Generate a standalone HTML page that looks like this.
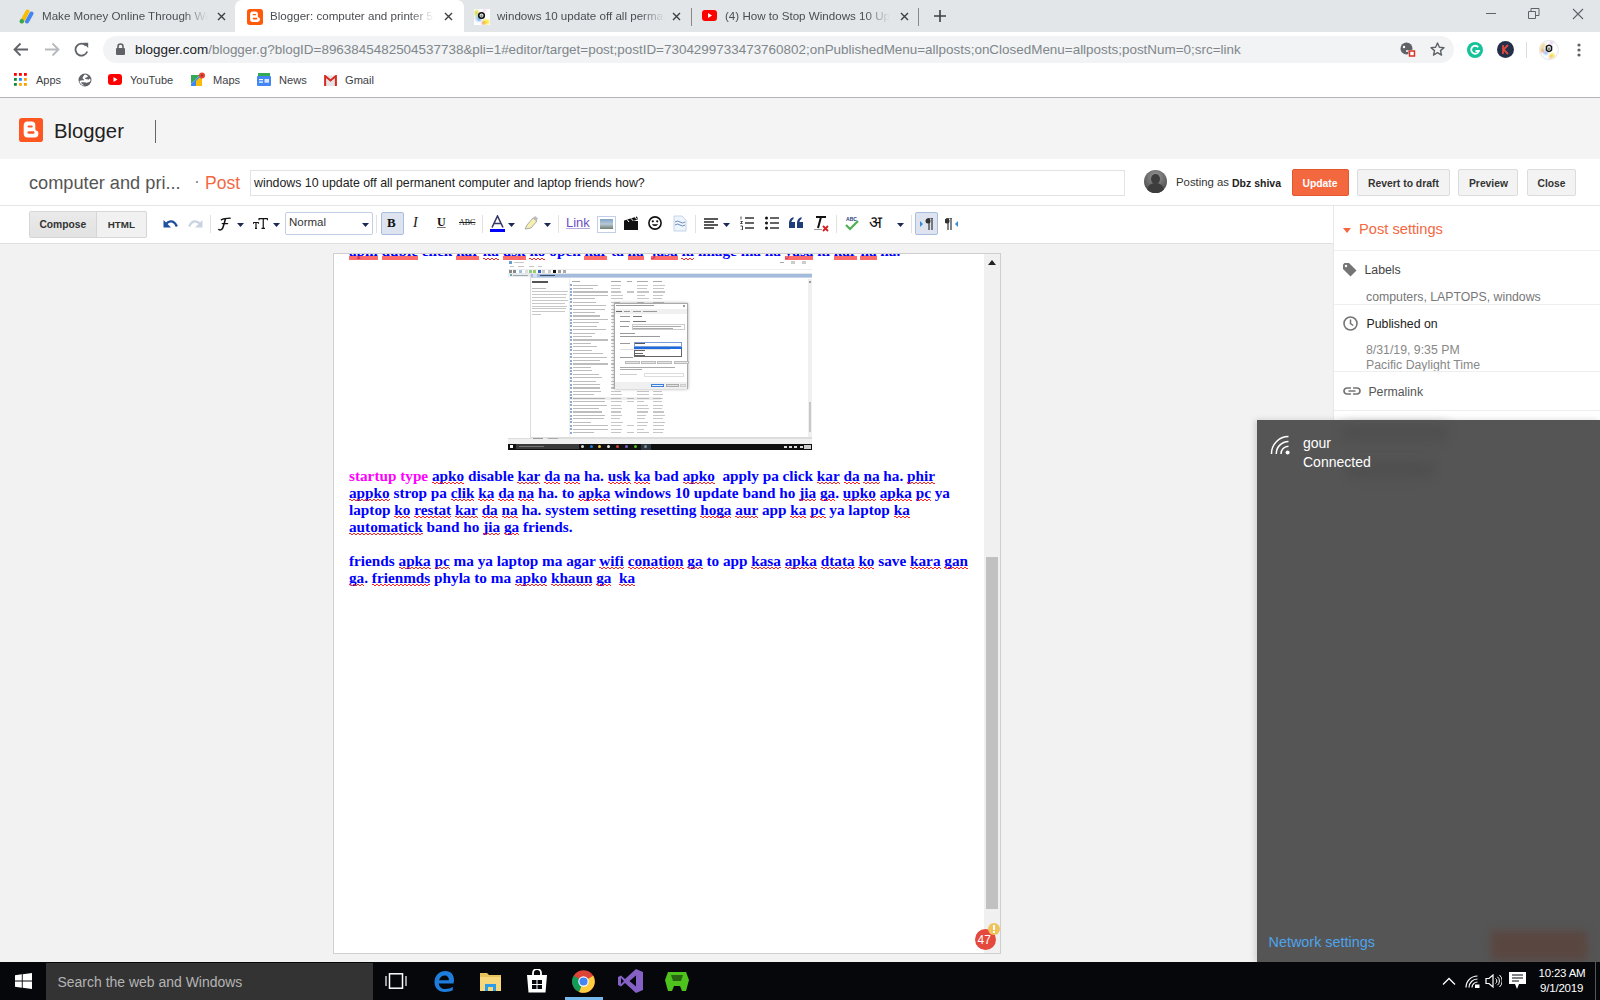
<!DOCTYPE html>
<html><head><meta charset="utf-8">
<style>
*{box-sizing:border-box;margin:0;padding:0}
html,body{width:1600px;height:1000px;overflow:hidden;background:#f2f2f2;font-family:"Liberation Sans",sans-serif;position:relative}
.a{position:absolute}
.t{position:absolute;white-space:nowrap;line-height:1}
/* chrome */
#tabs{left:0;top:0;width:1600px;height:32px;background:#e3e6e9}
#toolbar{left:0;top:32px;width:1600px;height:65px;background:#fff}
#bline{left:0;top:97px;width:1600px;height:1px;background:#b6b4ba}
.tabtxt{font-size:12.4px;color:#4a4d51}
.x{font-size:14px;color:#3c4043}
/* blogger */
#bhead{left:0;top:98px;width:1600px;height:61px;background:#f4f4f4}
#trow{left:0;top:159px;width:1600px;height:47px;background:#fff;border-bottom:1px solid #e5e5e5}
#tbar{left:0;top:206px;width:1333px;height:38px;background:#fff;border-bottom:1px solid #e0e0e0}
#side{left:1333px;top:206px;width:267px;height:756px;background:#fff;border-left:1px solid #e8e8e8}
.btn{position:absolute;height:27px;border:1px solid #d6d6d6;background:#f3f3f3;border-radius:2px;font-size:11.4px;font-weight:bold;color:#333;text-align:center;line-height:25px}
#frame{left:333px;top:253px;width:668px;height:701px;background:#fff;border:1px solid #cfcfcf;overflow:hidden}
.ed{font:bold 15.24px/17px "Liberation Serif",serif;color:#0000ff}
.sp{position:relative}.sp2{position:relative}.sp2::after{content:"";position:absolute;left:0;right:0;top:13.8px;height:4px;background:rgba(255,70,70,.8)}.sp::after{content:"";position:absolute;left:0;right:0;top:15.4px;height:2px;background:linear-gradient(90deg,#f22 50%,transparent 50%) 0 0/4px 1px repeat-x,linear-gradient(90deg,transparent 50%,#f22 50%) 0 1px/4px 1px repeat-x}
/* flyout */
#fly{left:1257px;top:420px;width:343px;height:542px;background:#555555;box-shadow:-2px 0 6px rgba(0,0,0,.15)}
#task{left:0;top:962px;width:1600px;height:38px;background:#05070b}
</style></head><body>
<div id="tabs" class="a"></div>
<div id="toolbar" class="a"></div>
<div id="bline" class="a"></div>

<!-- TAB STRIP -->
<div class="a" style="left:235px;top:0;width:229px;height:32px;background:#fff;border-radius:7px 7px 0 0"></div>
<svg class="a" style="left:19px;top:9px" width="16" height="15" viewBox="0 0 16 15"><path d="M3 12.5 L8.5 2.5" stroke="#fbbc04" stroke-width="4" stroke-linecap="round"/><path d="M8 12.5 L12.5 4.5" stroke="#4285f4" stroke-width="4" stroke-linecap="round"/><circle cx="2.8" cy="12.3" r="2.2" fill="#34a853"/></svg>
<div class="t tabtxt" style="left:42px;top:10px;font-size:11.6px;width:166px;overflow:hidden;-webkit-mask-image:linear-gradient(90deg,#000 85%,transparent)">Make Money Online Through Web</div>
<svg class="a" style="left:217px;top:12px" width="9" height="9" viewBox="0 0 9 9"><path d="M1 1L8 8M8 1L1 8" stroke="#3c4043" stroke-width="1.4"/></svg>
<svg class="a" style="left:246.5px;top:8.5px" width="16" height="16" viewBox="0 0 24 24"><rect width="24" height="24" rx="4" fill="#ff5a0a"/><path d="M4.7 7.5Q4.7 3.6 8.6 3.6H12.6Q16.3 3.6 16.3 7.3V11.2Q16.3 12.6 17.6 12.8Q19.4 13 19.4 15V15.8Q19.4 19.4 15.8 19.4H8.6Q4.7 19.4 4.7 15.5Z" fill="#fff"/><rect x="8.5" y="7.6" width="5.2" height="1.9" rx="0.95" fill="#ff5a0a"/><rect x="8.5" y="13.3" width="7" height="2.4" rx="1.2" fill="#ff5a0a"/></svg>
<div class="t tabtxt" style="left:270px;top:10px;font-size:11.6px;width:164px;overflow:hidden;-webkit-mask-image:linear-gradient(90deg,#000 85%,transparent)">Blogger: computer and printer 5 min</div>
<svg class="a" style="left:444px;top:12px" width="9" height="9" viewBox="0 0 9 9"><path d="M1 1L8 8M8 1L1 8" stroke="#3c4043" stroke-width="1.4"/></svg>
<svg class="a" style="left:474px;top:8.5px" width="16" height="16" viewBox="0 0 16 16"><defs><filter id="bl1" x="-20%" y="-20%" width="140%" height="140%"><feGaussianBlur stdDeviation="0.9"/></filter></defs><rect width="16" height="16" fill="#fff"/><g filter="url(#bl1)"><ellipse cx="2.5" cy="4" rx="2" ry="3" fill="#d8d040"/><ellipse cx="3.5" cy="7.5" rx="1.5" ry="1.5" fill="#50e0f0"/><ellipse cx="5" cy="10.5" rx="2.5" ry="1.5" fill="#4aa0f8"/><ellipse cx="12" cy="13" rx="3.5" ry="2.5" fill="#f8e830"/><ellipse cx="9.5" cy="14" rx="1.5" ry="1.8" fill="#f07040"/><circle cx="10.5" cy="1.5" r="1" fill="#e080f0"/><circle cx="2" cy="9" r="1" fill="#f0a070"/></g><circle cx="7.5" cy="6.5" r="2.8" fill="none" stroke="#111" stroke-width="1.6"/><path d="M6.5 5.5h2v2.5h-2z" fill="#888"/></svg>
<div class="t tabtxt" style="left:497px;top:10px;font-size:11.6px;width:168px;overflow:hidden;-webkit-mask-image:linear-gradient(90deg,#000 85%,transparent)">windows 10 update off all permanent</div>
<svg class="a" style="left:672px;top:12px" width="9" height="9" viewBox="0 0 9 9"><path d="M1 1L8 8M8 1L1 8" stroke="#3c4043" stroke-width="1.4"/></svg>
<div class="a" style="left:691px;top:8px;width:1px;height:18px;background:#888"></div>
<svg class="a" style="left:702px;top:10px" width="15" height="11" viewBox="0 0 15 11"><rect width="15" height="11" rx="3" fill="#f00"/><path d="M6 3v5l4-2.5z" fill="#fff"/></svg>
<div class="t tabtxt" style="left:725px;top:10px;font-size:11.6px;width:165px;overflow:hidden;-webkit-mask-image:linear-gradient(90deg,#000 85%,transparent)">(4) How to Stop Windows 10 Update</div>
<svg class="a" style="left:900px;top:12px" width="9" height="9" viewBox="0 0 9 9"><path d="M1 1L8 8M8 1L1 8" stroke="#3c4043" stroke-width="1.4"/></svg>
<div class="a" style="left:918px;top:8px;width:1px;height:18px;background:#888"></div>
<svg class="a" style="left:934px;top:10px" width="12" height="12" viewBox="0 0 12 12"><path d="M6 0v12M0 6h12" stroke="#3c4043" stroke-width="1.6"/></svg>
<div class="a" style="left:1486px;top:13px;width:10px;height:1px;background:#5f6368"></div>
<svg class="a" style="left:1528px;top:8px" width="12" height="11" viewBox="0 0 12 11"><path d="M.5 3.5h7v7h-7zM3 3.5V.5h8v7H8" fill="none" stroke="#5f6368" stroke-width="1"/></svg>
<svg class="a" style="left:1572px;top:8px" width="12" height="12" viewBox="0 0 12 12"><path d="M1 1L11 11M11 1L1 11" stroke="#5f6368" stroke-width="1.1"/></svg>
<!-- TOOLBAR -->
<svg class="a" style="left:13px;top:42px" width="16" height="15" viewBox="0 0 16 15"><path d="M15 7.5H2M7.5 1.5L1.5 7.5l6 6" fill="none" stroke="#5f6368" stroke-width="1.8"/></svg>
<svg class="a" style="left:44px;top:42px" width="16" height="15" viewBox="0 0 16 15"><path d="M1 7.5h13M8.5 1.5l6 6-6 6" fill="none" stroke="#b6b9bd" stroke-width="1.8"/></svg>
<svg class="a" style="left:74px;top:42px" width="16" height="15" viewBox="0 0 16 15"><path d="M13.2 9.5A6 6 0 1 1 12 3.6" fill="none" stroke="#5f6368" stroke-width="1.8"/><path d="M9 .8h5.2V6z" fill="#5f6368"/></svg>
<div class="a" style="left:103px;top:36px;width:1351px;height:27px;background:#f1f3f4;border-radius:14px"></div>
<svg class="a" style="left:116px;top:43px" width="9" height="12" viewBox="0 0 9 12"><path d="M2 5V3.5a2.5 2.5 0 0 1 5 0V5" fill="none" stroke="#5f6368" stroke-width="1.6"/><rect x="0" y="5" width="9" height="7" rx="1" fill="#5f6368"/></svg>
<div class="t" style="left:135px;top:43px;font-size:13.45px;color:#80868b"><span style="color:#202124">blogger.com</span>/blogger.g?blogID=8963845482504537738&amp;pli=1#editor/target=post;postID=7304299733473760802;onPublishedMenu=allposts;onClosedMenu=allposts;postNum=0;src=link</div>
<svg class="a" style="left:1400px;top:42px" width="16" height="15" viewBox="0 0 16 15"><circle cx="6.5" cy="6.5" r="6" fill="#5f6368"/><circle cx="4" cy="5" r="1.2" fill="#fff"/><circle cx="7" cy="9" r="1" fill="#fff"/><rect x="8.5" y="8" width="7" height="7" fill="#fff"/><rect x="9.5" y="9" width="5" height="5" fill="none" stroke="#d93025" stroke-width="1.5"/></svg>
<svg class="a" style="left:1430px;top:42px" width="15" height="14" viewBox="0 0 15 14"><path d="M7.5 1l1.9 4.2 4.6.4-3.5 3 1 4.5-4-2.4-4 2.4 1-4.5-3.5-3 4.6-.4z" fill="none" stroke="#5f6368" stroke-width="1.4" stroke-linejoin="round"/></svg>
<svg class="a" style="left:1467px;top:42px" width="16" height="16" viewBox="0 0 16 16"><circle cx="8" cy="8" r="8" fill="#15c39a"/><path d="M11.3 5.2A4 4 0 1 0 12 9H8.5" fill="none" stroke="#fff" stroke-width="1.8"/></svg>
<svg class="a" style="left:1497px;top:41px" width="17" height="17" viewBox="0 0 17 17"><circle cx="8.5" cy="8.5" r="8.5" fill="#24304a"/><path d="M6 4v9M11 4L6.5 8.5 11 13" fill="none" stroke="#e04a3a" stroke-width="1.8"/></svg>
<div class="a" style="left:1526px;top:42px;width:1px;height:16px;background:#dadce0"></div>
<svg class="a" style="left:1538.5px;top:39.5px" width="20" height="20" viewBox="0 0 20 20"><defs><filter id="bl2" x="-20%" y="-20%" width="140%" height="140%"><feGaussianBlur stdDeviation="0.8"/></filter></defs><circle cx="10" cy="10" r="9.5" fill="#fff" stroke="#e2e2e2" stroke-width=".8"/><g filter="url(#bl2)"><path d="M3 12A8 8 0 0 1 6 4" stroke="#e8c040" stroke-width="1.8" fill="none"/><circle cx="4" cy="11" r="1.3" fill="#f07030"/><circle cx="5.5" cy="9" r="1" fill="#40e0f0"/><ellipse cx="7" cy="13" rx="2" ry="1.2" fill="#4aa0f8"/><ellipse cx="13" cy="15.5" rx="2.5" ry="2" fill="#f8e020"/><circle cx="11.5" cy="17" r="1" fill="#f06030"/><circle cx="12.5" cy="3" r="0.9" fill="#c040f0"/><circle cx="10" cy="10" r="9" fill="none" stroke="#ccc" stroke-width=".6" opacity=".5"/></g><path d="M7.5 6.5Q10 4 12.5 6.5V10Q10 13 7.5 10Z" fill="none" stroke="#111" stroke-width="1.6"/><rect x="9" y="7.5" width="2" height="3" fill="#888"/></svg>
<svg class="a" style="left:1577px;top:43px" width="4" height="14" viewBox="0 0 4 14"><circle cx="2" cy="2" r="1.6" fill="#5f6368"/><circle cx="2" cy="7" r="1.6" fill="#5f6368"/><circle cx="2" cy="12" r="1.6" fill="#5f6368"/></svg>
<!-- BOOKMARKS -->
<svg class="a" style="left:14px;top:73px" width="13" height="13" viewBox="0 0 13 13">
<rect x="0" y="0" width="2.8" height="2.8" fill="#f00"/><rect x="5" y="0" width="2.8" height="2.8" fill="#f00"/><rect x="10" y="0" width="2.8" height="2.8" fill="#f00"/>
<rect x="0" y="5" width="2.8" height="2.8" fill="#0a8a3a"/><rect x="5" y="5" width="2.8" height="2.8" fill="#1a8cff"/><rect x="10" y="5" width="2.8" height="2.8" fill="#f5a000"/>
<rect x="0" y="10" width="2.8" height="2.8" fill="#0a8a3a"/><rect x="5" y="10" width="2.8" height="2.8" fill="#ffa800"/><rect x="10" y="10" width="2.8" height="2.8" fill="#f5a000"/></svg>
<div class="t" style="left:36px;top:74.8px;font-size:11px;color:#3c4043">Apps</div>
<svg class="a" style="left:78px;top:73px" width="14" height="14" viewBox="0 0 14 14"><circle cx="7" cy="7" r="6.5" fill="#5f6368"/><path d="M7 1.5c1.5.3 2.5 1 3 2-.8 1-2.5.8-3 2 .5 1 2 .5 3.5 1.2L12 5.5c.5.8.6 1.6.5 2.5C11 9.5 9 10 7.5 9.5 6 9 4.5 9 3 9.5c.5 1 1.5 2 3 2.5L5 12.5C3 11.5 1.8 10 1.5 8c1.5-.5 3-1 4.5-.5C6.5 6.5 5 6 4.5 5 5 3.5 6 2 7 1.5z" fill="#fff"/></svg>
<svg class="a" style="left:108px;top:74px" width="14" height="11" viewBox="0 0 14 11"><rect width="14" height="11" rx="3" fill="#f00"/><path d="M5.5 3v5l4-2.5z" fill="#fff"/></svg>
<div class="t" style="left:130px;top:74.8px;font-size:11px;color:#3c4043">YouTube</div>
<svg class="a" style="left:191px;top:72px" width="14" height="14" viewBox="0 0 14 14"><path d="M0 3h9l-9 9z" fill="#34a853"/><path d="M0 12L9 3h2v11H0z" fill="#4285f4"/><path d="M5 9l4-4 2 2v7H5z" fill="#fbbc04"/><circle cx="11" cy="3.5" r="3" fill="#ea4335"/><circle cx="11" cy="3.5" r="1" fill="#a52714"/></svg>
<div class="t" style="left:213px;top:74.8px;font-size:11.1px;color:#3c4043">Maps</div>
<svg class="a" style="left:257px;top:73px" width="14" height="13" viewBox="0 0 14 13"><rect x="1" y="0" width="12" height="4" fill="#34a853"/><rect x="0" y="3" width="14" height="10" rx="1" fill="#4285f4"/><rect x="2" y="6" width="4" height="1.2" fill="#fff"/><rect x="2" y="8.5" width="4" height="1.2" fill="#fff"/><rect x="7.5" y="6" width="4.5" height="3.7" fill="#fff" opacity=".8"/></svg>
<div class="t" style="left:279px;top:74.8px;font-size:11.1px;color:#3c4043">News</div>
<svg class="a" style="left:324px;top:75px" width="13" height="11" viewBox="0 0 13 11"><rect x="1" y="0.5" width="11" height="10.5" fill="#e4e4e4"/><path d="M1.1 11V1L6.5 5.5 11.9 1V11" fill="none" stroke="#d42a20" stroke-width="2"/></svg>
<div class="t" style="left:345px;top:74.8px;font-size:11.1px;color:#3c4043">Gmail</div>

<div id="bhead" class="a"></div>
<div id="trow" class="a"></div>
<div id="tbar" class="a"></div>
<div id="side" class="a"></div>


<!-- SIDEBAR -->
<svg class="a" style="left:1343px;top:228px" width="8" height="5" viewBox="0 0 8 5"><path d="M0 0h8L4 5z" fill="#f4683f"/></svg>
<div class="t" style="left:1359px;top:221.6px;font-size:14.67px;color:#f4683f">Post settings</div>
<div class="a" style="left:1334px;top:250px;width:266px;height:1px;background:#eeeeee"></div>
<svg class="a" style="left:1343px;top:263px" width="14" height="14" viewBox="0 0 14 14"><path d="M0 1.5V6l7.5 7.5L13.5 7.5 6 0H1.5z" fill="#757575"/><circle cx="3" cy="3" r="1.2" fill="#fff"/></svg>
<div class="t" style="left:1364.5px;top:263.8px;font-size:12.3px;color:#444">Labels</div>
<div class="t" style="left:1366px;top:291.2px;font-size:12.3px;color:#777">computers, LAPTOPS, windows</div>
<div class="a" style="left:1334px;top:304px;width:266px;height:1px;background:#eeeeee"></div>
<svg class="a" style="left:1343px;top:316px" width="15" height="15" viewBox="0 0 15 15"><circle cx="7.5" cy="7.5" r="6.5" fill="none" stroke="#757575" stroke-width="1.6"/><path d="M7.5 3.5v4l2.8 2" fill="none" stroke="#757575" stroke-width="1.5"/></svg>
<div class="t" style="left:1366.5px;top:317.5px;font-size:12.3px;color:#222">Published on</div>
<div class="t" style="left:1366px;top:344.1px;font-size:12.3px;color:#888">8/31/19, 9:35 PM</div>
<div class="t" style="left:1366px;top:358.7px;font-size:12.3px;color:#888">Pacific Daylight Time</div>
<div class="a" style="left:1334px;top:371px;width:266px;height:1px;background:#eeeeee"></div>
<svg class="a" style="left:1342.5px;top:387px" width="18" height="8" viewBox="0 0 18 8"><path d="M8 1H4a3 3 0 0 0 0 6h4M10 1h4a3 3 0 0 1 0 6h-4M5.5 4h7" fill="none" stroke="#757575" stroke-width="1.7"/></svg>
<div class="t" style="left:1368.4px;top:385.6px;font-size:12.3px;color:#555">Permalink</div>
<div class="a" style="left:1334px;top:410px;width:266px;height:1px;background:#eeeeee"></div>
<div id="frame" class="a"></div><!-- FRAME CONTENT -->
<div class="a" style="left:334px;top:254px;width:650px;height:699px;overflow:hidden">
 <div class="t ed" style="left:15px;top:-11.7px;line-height:17px"><span class="sp2">apni</span> <span class="sp2">duble</span> click <span class="sp2">kar</span> <span class="sp">ka</span> <span class="sp2">usk</span> <span class="sp">ko</span> open <span class="sp2">kar</span> ta <span class="sp2">na</span>&nbsp; <span class="sp2">jasa</span> <span class="sp">ki</span> image ma na <span class="sp2">yasa</span> ki <span class="sp2">kar</span> <span class="sp2">na</span> ha.</div>
 <div class="t ed" style="left:15px;top:213px;line-height:17px"><span style="color:#ff00ff">startup type</span> <span class="sp">apko</span> disable <span class="sp">kar</span> <span class="sp">da</span> <span class="sp">na</span> ha. <span class="sp">usk</span> <span class="sp">ka</span> bad <span class="sp">apko</span>&nbsp; apply pa click <span class="sp">kar</span> <span class="sp">da</span> <span class="sp">na</span> ha. <span class="sp">phir</span><br><span class="sp">appko</span> strop pa <span class="sp">clik</span> <span class="sp">ka</span> <span class="sp">da</span> <span class="sp">na</span> ha. to <span class="sp">apka</span> windows 10 update band ho <span class="sp">jia</span> <span class="sp">ga</span>. <span class="sp">upko</span> <span class="sp">apka</span> <span class="sp">pc</span> ya<br>laptop <span class="sp">ko</span> <span class="sp">restat</span> <span class="sp">kar</span> <span class="sp">da</span> <span class="sp">na</span> ha. system setting resetting <span class="sp">hoga</span> <span class="sp">aur</span> app <span class="sp">ka</span> <span class="sp">pc</span> ya laptop <span class="sp">ka</span><br><span class="sp">automatick</span> band ho <span class="sp">jia</span> <span class="sp">ga</span> friends.<br>&nbsp;<br>friends <span class="sp">apka</span> <span class="sp">pc</span> ma ya laptop ma agar <span class="sp">wifi</span> <span class="sp">conation</span> <span class="sp">ga</span> to app <span class="sp">kasa</span> <span class="sp">apka</span> <span class="sp">dtata</span> <span class="sp">ko</span> save <span class="sp">kara</span> <span class="sp">gan</span><br><span class="sp">ga</span>. <span class="sp">frienmds</span> phyla to ma <span class="sp">apko</span> <span class="sp">khaun</span> <span class="sp">ga</span>&nbsp; <span class="sp">ka</span></div>
 <div id="shot" class="a" style="left:174px;top:7px;width:304px;height:189px;background:#fff;overflow:hidden;filter:blur(0.5px)">
<div class="a" style="left:0;top:176.5px;width:304px;height:6px;background:#f0f0f0;border-top:0.6px solid #ddd"></div>
<div class="a" style="left:1px;top:0px;width:3px;height:3px;background:#6c9bd2;"></div>
<div class="a" style="left:6px;top:1px;width:10px;height:1px;background:#c8c8c8;"></div>
<div class="a" style="left:272px;top:1px;width:4px;height:1px;background:#aaa;"></div>
<div class="a" style="left:283px;top:0px;width:4px;height:3px;background:#ccc;"></div>
<div class="a" style="left:294px;top:0px;width:4px;height:3px;background:#ccc;"></div>
<div class="a" style="left:2px;top:5px;width:4px;height:1.3px;background:#c4c4c4;"></div>
<div class="a" style="left:10px;top:5px;width:6px;height:1.3px;background:#c4c4c4;"></div>
<div class="a" style="left:21px;top:5px;width:5px;height:1.3px;background:#c4c4c4;"></div>
<div class="a" style="left:30px;top:5px;width:4px;height:1.3px;background:#c4c4c4;"></div>
<div class="a" style="left:0px;top:7.5px;width:304px;height:1px;background:#eeeeee;"></div>
<div class="a" style="left:1px;top:9px;width:2.6px;height:2.6px;background:#888;"></div>
<div class="a" style="left:5px;top:9px;width:2.6px;height:2.6px;background:#888;"></div>
<div class="a" style="left:11px;top:9px;width:2.6px;height:2.6px;background:#9cc0e8;"></div>
<div class="a" style="left:17px;top:9px;width:2.6px;height:2.6px;background:#ddd;"></div>
<div class="a" style="left:21px;top:9px;width:2.6px;height:2.6px;background:#8c8;"></div>
<div class="a" style="left:25px;top:9px;width:2.6px;height:2.6px;background:#9c6;"></div>
<div class="a" style="left:30px;top:9px;width:2.6px;height:2.6px;background:#3060c0;"></div>
<div class="a" style="left:34px;top:9px;width:2.6px;height:2.6px;background:#ccc;"></div>
<div class="a" style="left:40px;top:9px;width:2.6px;height:2.6px;background:#ccc;"></div>
<div class="a" style="left:45px;top:9px;width:2.6px;height:2.6px;background:#111;"></div>
<div class="a" style="left:50px;top:9px;width:2.6px;height:2.6px;background:#999;"></div>
<div class="a" style="left:55px;top:9px;width:2.6px;height:2.6px;background:#aaa;"></div>
<div class="a" style="left:0px;top:12px;width:304px;height:0.8px;background:#e6e6e6;"></div>
<div class="a" style="left:0px;top:12.5px;width:22px;height:3.5px;background:#e9edf2;"></div>
<div class="a" style="left:2px;top:13.3px;width:2px;height:2px;background:#7aa;"></div>
<div class="a" style="left:5px;top:13.8px;width:15px;height:1.3px;background:#9aa;"></div>
<div class="a" style="left:22px;top:12px;width:1px;height:165px;background:#dcdcdc;"></div>
<div class="a" style="left:23px;top:12.5px;width:281px;height:3.5px;background:#a3bbdc;"></div>
<div class="a" style="left:25px;top:13px;width:4px;height:2.5px;background:#d0dff0;"></div>
<div class="a" style="left:32px;top:13.8px;width:15px;height:1.3px;background:#3d4d6a;"></div>
<div class="a" style="left:23px;top:16px;width:281px;height:0.8px;background:#c9d6e8;"></div>
<div class="a" style="left:24px;top:20px;width:16px;height:1.6px;background:#555;"></div>
<div class="a" style="left:24px;top:27px;width:14px;height:1.1px;background:#bbb;"></div>
<div class="a" style="left:24px;top:30.0px;width:36px;height:1.1px;background:#c8c8c8;"></div>
<div class="a" style="left:24px;top:32.9px;width:35px;height:1.1px;background:#c8c8c8;"></div>
<div class="a" style="left:24px;top:35.8px;width:34px;height:1.1px;background:#c8c8c8;"></div>
<div class="a" style="left:24px;top:38.7px;width:36px;height:1.1px;background:#c8c8c8;"></div>
<div class="a" style="left:24px;top:41.6px;width:33px;height:1.1px;background:#c8c8c8;"></div>
<div class="a" style="left:24px;top:44.5px;width:35px;height:1.1px;background:#c8c8c8;"></div>
<div class="a" style="left:24px;top:47.4px;width:34px;height:1.1px;background:#c8c8c8;"></div>
<div class="a" style="left:24px;top:50.3px;width:33px;height:1.1px;background:#c8c8c8;"></div>
<div class="a" style="left:24px;top:53.2px;width:9px;height:1.1px;background:#c8c8c8;"></div>
<div class="a" style="left:61px;top:17px;width:0.8px;height:160px;background:#eeeeee;"></div>
<div class="a" style="left:64px;top:19.5px;width:8px;height:1.1px;background:#aaa;"></div>
<div class="a" style="left:103px;top:19.5px;width:10px;height:1.1px;background:#aaa;"></div>
<div class="a" style="left:119px;top:19.5px;width:5px;height:1.1px;background:#aaa;"></div>
<div class="a" style="left:129px;top:19.5px;width:11px;height:1.1px;background:#aaa;"></div>
<div class="a" style="left:145px;top:19.5px;width:9px;height:1.1px;background:#aaa;"></div>
<div class="a" style="left:62px;top:23.2px;width:2px;height:2px;background:#8eaad0;"></div>
<div class="a" style="left:65px;top:23.5px;width:25px;height:1.2px;background:#bdbdbd;"></div>
<div class="a" style="left:103px;top:23.5px;width:10px;height:1.2px;background:#c6c6c6;"></div>
<div class="a" style="left:129px;top:23.5px;width:11px;height:1.2px;background:#c6c6c6;"></div>
<div class="a" style="left:145px;top:23.5px;width:12px;height:1.2px;background:#c6c6c6;"></div>
<div class="a" style="left:62px;top:26.63px;width:2px;height:2px;background:#8eaad0;"></div>
<div class="a" style="left:65px;top:26.93px;width:20px;height:1.2px;background:#bdbdbd;"></div>
<div class="a" style="left:103px;top:26.93px;width:9px;height:1.2px;background:#c6c6c6;"></div>
<div class="a" style="left:129px;top:26.93px;width:10px;height:1.2px;background:#c6c6c6;"></div>
<div class="a" style="left:145px;top:26.93px;width:11px;height:1.2px;background:#c6c6c6;"></div>
<div class="a" style="left:62px;top:30.06px;width:2px;height:2px;background:#8eaad0;"></div>
<div class="a" style="left:65px;top:30.36px;width:35px;height:1.2px;background:#bdbdbd;"></div>
<div class="a" style="left:103px;top:30.36px;width:10px;height:1.2px;background:#c6c6c6;"></div>
<div class="a" style="left:119px;top:30.36px;width:7px;height:1.2px;background:#c6c6c6;"></div>
<div class="a" style="left:129px;top:30.36px;width:12px;height:1.2px;background:#c6c6c6;"></div>
<div class="a" style="left:145px;top:30.36px;width:12px;height:1.2px;background:#c6c6c6;"></div>
<div class="a" style="left:62px;top:33.49px;width:2px;height:2px;background:#8eaad0;"></div>
<div class="a" style="left:65px;top:33.79px;width:35px;height:1.2px;background:#bdbdbd;"></div>
<div class="a" style="left:103px;top:33.79px;width:12px;height:1.2px;background:#c6c6c6;"></div>
<div class="a" style="left:129px;top:33.79px;width:8px;height:1.2px;background:#c6c6c6;"></div>
<div class="a" style="left:145px;top:33.79px;width:10px;height:1.2px;background:#c6c6c6;"></div>
<div class="a" style="left:62px;top:36.92px;width:2px;height:2px;background:#8eaad0;"></div>
<div class="a" style="left:65px;top:37.22px;width:22px;height:1.2px;background:#bdbdbd;"></div>
<div class="a" style="left:103px;top:37.22px;width:12px;height:1.2px;background:#c6c6c6;"></div>
<div class="a" style="left:129px;top:37.22px;width:12px;height:1.2px;background:#c6c6c6;"></div>
<div class="a" style="left:145px;top:37.22px;width:9px;height:1.2px;background:#c6c6c6;"></div>
<div class="a" style="left:62px;top:40.35000000000001px;width:2px;height:2px;background:#8eaad0;"></div>
<div class="a" style="left:65px;top:40.650000000000006px;width:23px;height:1.2px;background:#bdbdbd;"></div>
<div class="a" style="left:103px;top:40.650000000000006px;width:9px;height:1.2px;background:#c6c6c6;"></div>
<div class="a" style="left:129px;top:40.650000000000006px;width:7px;height:1.2px;background:#c6c6c6;"></div>
<div class="a" style="left:145px;top:40.650000000000006px;width:11px;height:1.2px;background:#c6c6c6;"></div>
<div class="a" style="left:62px;top:43.78px;width:2px;height:2px;background:#8eaad0;"></div>
<div class="a" style="left:65px;top:44.08px;width:33px;height:1.2px;background:#bdbdbd;"></div>
<div class="a" style="left:103px;top:44.08px;width:12px;height:1.2px;background:#c6c6c6;"></div>
<div class="a" style="left:129px;top:44.08px;width:10px;height:1.2px;background:#c6c6c6;"></div>
<div class="a" style="left:145px;top:44.08px;width:12px;height:1.2px;background:#c6c6c6;"></div>
<div class="a" style="left:62px;top:47.21000000000001px;width:2px;height:2px;background:#8eaad0;"></div>
<div class="a" style="left:65px;top:47.510000000000005px;width:32px;height:1.2px;background:#bdbdbd;"></div>
<div class="a" style="left:103px;top:47.510000000000005px;width:10px;height:1.2px;background:#c6c6c6;"></div>
<div class="a" style="left:129px;top:47.510000000000005px;width:7px;height:1.2px;background:#c6c6c6;"></div>
<div class="a" style="left:145px;top:47.510000000000005px;width:9px;height:1.2px;background:#c6c6c6;"></div>
<div class="a" style="left:62px;top:50.64px;width:2px;height:2px;background:#8eaad0;"></div>
<div class="a" style="left:65px;top:50.94px;width:22px;height:1.2px;background:#bdbdbd;"></div>
<div class="a" style="left:103px;top:50.94px;width:12px;height:1.2px;background:#c6c6c6;"></div>
<div class="a" style="left:119px;top:50.94px;width:7px;height:1.2px;background:#c6c6c6;"></div>
<div class="a" style="left:129px;top:50.94px;width:12px;height:1.2px;background:#c6c6c6;"></div>
<div class="a" style="left:145px;top:50.94px;width:12px;height:1.2px;background:#c6c6c6;"></div>
<div class="a" style="left:62px;top:54.07000000000001px;width:2px;height:2px;background:#8eaad0;"></div>
<div class="a" style="left:65px;top:54.370000000000005px;width:27px;height:1.2px;background:#bdbdbd;"></div>
<div class="a" style="left:103px;top:54.370000000000005px;width:12px;height:1.2px;background:#c6c6c6;"></div>
<div class="a" style="left:129px;top:54.370000000000005px;width:10px;height:1.2px;background:#c6c6c6;"></div>
<div class="a" style="left:145px;top:54.370000000000005px;width:11px;height:1.2px;background:#c6c6c6;"></div>
<div class="a" style="left:62px;top:57.50000000000001px;width:2px;height:2px;background:#8eaad0;"></div>
<div class="a" style="left:65px;top:57.800000000000004px;width:35px;height:1.2px;background:#bdbdbd;"></div>
<div class="a" style="left:103px;top:57.800000000000004px;width:12px;height:1.2px;background:#c6c6c6;"></div>
<div class="a" style="left:129px;top:57.800000000000004px;width:9px;height:1.2px;background:#c6c6c6;"></div>
<div class="a" style="left:145px;top:57.800000000000004px;width:9px;height:1.2px;background:#c6c6c6;"></div>
<div class="a" style="left:62px;top:60.93000000000001px;width:2px;height:2px;background:#8eaad0;"></div>
<div class="a" style="left:65px;top:61.230000000000004px;width:26px;height:1.2px;background:#bdbdbd;"></div>
<div class="a" style="left:103px;top:61.230000000000004px;width:10px;height:1.2px;background:#c6c6c6;"></div>
<div class="a" style="left:129px;top:61.230000000000004px;width:9px;height:1.2px;background:#c6c6c6;"></div>
<div class="a" style="left:145px;top:61.230000000000004px;width:9px;height:1.2px;background:#c6c6c6;"></div>
<div class="a" style="left:62px;top:64.36px;width:2px;height:2px;background:#8eaad0;"></div>
<div class="a" style="left:65px;top:64.66px;width:24px;height:1.2px;background:#bdbdbd;"></div>
<div class="a" style="left:103px;top:64.66px;width:11px;height:1.2px;background:#c6c6c6;"></div>
<div class="a" style="left:129px;top:64.66px;width:7px;height:1.2px;background:#c6c6c6;"></div>
<div class="a" style="left:145px;top:64.66px;width:12px;height:1.2px;background:#c6c6c6;"></div>
<div class="a" style="left:62px;top:67.79px;width:2px;height:2px;background:#8eaad0;"></div>
<div class="a" style="left:65px;top:68.09px;width:33px;height:1.2px;background:#bdbdbd;"></div>
<div class="a" style="left:103px;top:68.09px;width:9px;height:1.2px;background:#c6c6c6;"></div>
<div class="a" style="left:129px;top:68.09px;width:7px;height:1.2px;background:#c6c6c6;"></div>
<div class="a" style="left:145px;top:68.09px;width:12px;height:1.2px;background:#c6c6c6;"></div>
<div class="a" style="left:62px;top:71.22000000000001px;width:2px;height:2px;background:#8eaad0;"></div>
<div class="a" style="left:65px;top:71.52000000000001px;width:22px;height:1.2px;background:#bdbdbd;"></div>
<div class="a" style="left:103px;top:71.52000000000001px;width:9px;height:1.2px;background:#c6c6c6;"></div>
<div class="a" style="left:129px;top:71.52000000000001px;width:10px;height:1.2px;background:#c6c6c6;"></div>
<div class="a" style="left:145px;top:71.52000000000001px;width:9px;height:1.2px;background:#c6c6c6;"></div>
<div class="a" style="left:62px;top:74.65px;width:2px;height:2px;background:#8eaad0;"></div>
<div class="a" style="left:65px;top:74.95px;width:19px;height:1.2px;background:#bdbdbd;"></div>
<div class="a" style="left:103px;top:74.95px;width:9px;height:1.2px;background:#c6c6c6;"></div>
<div class="a" style="left:129px;top:74.95px;width:11px;height:1.2px;background:#c6c6c6;"></div>
<div class="a" style="left:145px;top:74.95px;width:11px;height:1.2px;background:#c6c6c6;"></div>
<div class="a" style="left:62px;top:78.08px;width:2px;height:2px;background:#8eaad0;"></div>
<div class="a" style="left:65px;top:78.38px;width:35px;height:1.2px;background:#bdbdbd;"></div>
<div class="a" style="left:103px;top:78.38px;width:11px;height:1.2px;background:#c6c6c6;"></div>
<div class="a" style="left:129px;top:78.38px;width:7px;height:1.2px;background:#c6c6c6;"></div>
<div class="a" style="left:145px;top:78.38px;width:11px;height:1.2px;background:#c6c6c6;"></div>
<div class="a" style="left:62px;top:81.51px;width:2px;height:2px;background:#8eaad0;"></div>
<div class="a" style="left:65px;top:81.81px;width:18px;height:1.2px;background:#bdbdbd;"></div>
<div class="a" style="left:103px;top:81.81px;width:9px;height:1.2px;background:#c6c6c6;"></div>
<div class="a" style="left:119px;top:81.81px;width:7px;height:1.2px;background:#c6c6c6;"></div>
<div class="a" style="left:129px;top:81.81px;width:11px;height:1.2px;background:#c6c6c6;"></div>
<div class="a" style="left:145px;top:81.81px;width:9px;height:1.2px;background:#c6c6c6;"></div>
<div class="a" style="left:62px;top:84.94000000000001px;width:2px;height:2px;background:#8eaad0;"></div>
<div class="a" style="left:65px;top:85.24000000000001px;width:24px;height:1.2px;background:#bdbdbd;"></div>
<div class="a" style="left:103px;top:85.24000000000001px;width:12px;height:1.2px;background:#c6c6c6;"></div>
<div class="a" style="left:129px;top:85.24000000000001px;width:9px;height:1.2px;background:#c6c6c6;"></div>
<div class="a" style="left:145px;top:85.24000000000001px;width:10px;height:1.2px;background:#c6c6c6;"></div>
<div class="a" style="left:62px;top:88.37px;width:2px;height:2px;background:#8eaad0;"></div>
<div class="a" style="left:65px;top:88.67px;width:19px;height:1.2px;background:#bdbdbd;"></div>
<div class="a" style="left:103px;top:88.67px;width:11px;height:1.2px;background:#c6c6c6;"></div>
<div class="a" style="left:129px;top:88.67px;width:8px;height:1.2px;background:#c6c6c6;"></div>
<div class="a" style="left:145px;top:88.67px;width:12px;height:1.2px;background:#c6c6c6;"></div>
<div class="a" style="left:62px;top:91.80000000000001px;width:2px;height:2px;background:#8eaad0;"></div>
<div class="a" style="left:65px;top:92.10000000000001px;width:30px;height:1.2px;background:#bdbdbd;"></div>
<div class="a" style="left:103px;top:92.10000000000001px;width:12px;height:1.2px;background:#c6c6c6;"></div>
<div class="a" style="left:129px;top:92.10000000000001px;width:10px;height:1.2px;background:#c6c6c6;"></div>
<div class="a" style="left:145px;top:92.10000000000001px;width:9px;height:1.2px;background:#c6c6c6;"></div>
<div class="a" style="left:62px;top:95.23px;width:2px;height:2px;background:#8eaad0;"></div>
<div class="a" style="left:65px;top:95.53px;width:34px;height:1.2px;background:#bdbdbd;"></div>
<div class="a" style="left:103px;top:95.53px;width:11px;height:1.2px;background:#c6c6c6;"></div>
<div class="a" style="left:129px;top:95.53px;width:12px;height:1.2px;background:#c6c6c6;"></div>
<div class="a" style="left:145px;top:95.53px;width:10px;height:1.2px;background:#c6c6c6;"></div>
<div class="a" style="left:62px;top:98.66000000000001px;width:2px;height:2px;background:#8eaad0;"></div>
<div class="a" style="left:65px;top:98.96000000000001px;width:27px;height:1.2px;background:#bdbdbd;"></div>
<div class="a" style="left:103px;top:98.96000000000001px;width:12px;height:1.2px;background:#c6c6c6;"></div>
<div class="a" style="left:129px;top:98.96000000000001px;width:11px;height:1.2px;background:#c6c6c6;"></div>
<div class="a" style="left:145px;top:98.96000000000001px;width:11px;height:1.2px;background:#c6c6c6;"></div>
<div class="a" style="left:62px;top:102.09px;width:2px;height:2px;background:#8eaad0;"></div>
<div class="a" style="left:65px;top:102.39px;width:35px;height:1.2px;background:#bdbdbd;"></div>
<div class="a" style="left:103px;top:102.39px;width:11px;height:1.2px;background:#c6c6c6;"></div>
<div class="a" style="left:119px;top:102.39px;width:7px;height:1.2px;background:#c6c6c6;"></div>
<div class="a" style="left:129px;top:102.39px;width:10px;height:1.2px;background:#c6c6c6;"></div>
<div class="a" style="left:145px;top:102.39px;width:11px;height:1.2px;background:#c6c6c6;"></div>
<div class="a" style="left:62px;top:105.52000000000001px;width:2px;height:2px;background:#8eaad0;"></div>
<div class="a" style="left:65px;top:105.82000000000001px;width:18px;height:1.2px;background:#bdbdbd;"></div>
<div class="a" style="left:103px;top:105.82000000000001px;width:12px;height:1.2px;background:#c6c6c6;"></div>
<div class="a" style="left:129px;top:105.82000000000001px;width:12px;height:1.2px;background:#c6c6c6;"></div>
<div class="a" style="left:145px;top:105.82000000000001px;width:10px;height:1.2px;background:#c6c6c6;"></div>
<div class="a" style="left:62px;top:108.95px;width:2px;height:2px;background:#8eaad0;"></div>
<div class="a" style="left:65px;top:109.25px;width:19px;height:1.2px;background:#bdbdbd;"></div>
<div class="a" style="left:103px;top:109.25px;width:11px;height:1.2px;background:#c6c6c6;"></div>
<div class="a" style="left:129px;top:109.25px;width:12px;height:1.2px;background:#c6c6c6;"></div>
<div class="a" style="left:145px;top:109.25px;width:11px;height:1.2px;background:#c6c6c6;"></div>
<div class="a" style="left:62px;top:112.38000000000001px;width:2px;height:2px;background:#8eaad0;"></div>
<div class="a" style="left:65px;top:112.68px;width:26px;height:1.2px;background:#bdbdbd;"></div>
<div class="a" style="left:103px;top:112.68px;width:12px;height:1.2px;background:#c6c6c6;"></div>
<div class="a" style="left:119px;top:112.68px;width:7px;height:1.2px;background:#c6c6c6;"></div>
<div class="a" style="left:129px;top:112.68px;width:7px;height:1.2px;background:#c6c6c6;"></div>
<div class="a" style="left:145px;top:112.68px;width:9px;height:1.2px;background:#c6c6c6;"></div>
<div class="a" style="left:62px;top:115.81px;width:2px;height:2px;background:#8eaad0;"></div>
<div class="a" style="left:65px;top:116.11px;width:29px;height:1.2px;background:#bdbdbd;"></div>
<div class="a" style="left:103px;top:116.11px;width:11px;height:1.2px;background:#c6c6c6;"></div>
<div class="a" style="left:129px;top:116.11px;width:9px;height:1.2px;background:#c6c6c6;"></div>
<div class="a" style="left:145px;top:116.11px;width:11px;height:1.2px;background:#c6c6c6;"></div>
<div class="a" style="left:62px;top:119.24000000000001px;width:2px;height:2px;background:#8eaad0;"></div>
<div class="a" style="left:65px;top:119.54px;width:23px;height:1.2px;background:#bdbdbd;"></div>
<div class="a" style="left:103px;top:119.54px;width:11px;height:1.2px;background:#c6c6c6;"></div>
<div class="a" style="left:119px;top:119.54px;width:7px;height:1.2px;background:#c6c6c6;"></div>
<div class="a" style="left:129px;top:119.54px;width:9px;height:1.2px;background:#c6c6c6;"></div>
<div class="a" style="left:145px;top:119.54px;width:11px;height:1.2px;background:#c6c6c6;"></div>
<div class="a" style="left:62px;top:122.67px;width:2px;height:2px;background:#8eaad0;"></div>
<div class="a" style="left:65px;top:122.97px;width:27px;height:1.2px;background:#bdbdbd;"></div>
<div class="a" style="left:103px;top:122.97px;width:12px;height:1.2px;background:#c6c6c6;"></div>
<div class="a" style="left:119px;top:122.97px;width:7px;height:1.2px;background:#c6c6c6;"></div>
<div class="a" style="left:129px;top:122.97px;width:7px;height:1.2px;background:#c6c6c6;"></div>
<div class="a" style="left:145px;top:122.97px;width:10px;height:1.2px;background:#c6c6c6;"></div>
<div class="a" style="left:62px;top:126.10000000000001px;width:2px;height:2px;background:#8eaad0;"></div>
<div class="a" style="left:65px;top:126.4px;width:27px;height:1.2px;background:#bdbdbd;"></div>
<div class="a" style="left:103px;top:126.4px;width:10px;height:1.2px;background:#c6c6c6;"></div>
<div class="a" style="left:129px;top:126.4px;width:9px;height:1.2px;background:#c6c6c6;"></div>
<div class="a" style="left:145px;top:126.4px;width:10px;height:1.2px;background:#c6c6c6;"></div>
<div class="a" style="left:62px;top:129.52999999999997px;width:2px;height:2px;background:#8eaad0;"></div>
<div class="a" style="left:65px;top:129.82999999999998px;width:28px;height:1.2px;background:#bdbdbd;"></div>
<div class="a" style="left:103px;top:129.82999999999998px;width:10px;height:1.2px;background:#c6c6c6;"></div>
<div class="a" style="left:129px;top:129.82999999999998px;width:12px;height:1.2px;background:#c6c6c6;"></div>
<div class="a" style="left:145px;top:129.82999999999998px;width:9px;height:1.2px;background:#c6c6c6;"></div>
<div class="a" style="left:62px;top:132.95999999999998px;width:2px;height:2px;background:#8eaad0;"></div>
<div class="a" style="left:65px;top:133.26px;width:21px;height:1.2px;background:#bdbdbd;"></div>
<div class="a" style="left:103px;top:133.26px;width:11px;height:1.2px;background:#c6c6c6;"></div>
<div class="a" style="left:129px;top:133.26px;width:12px;height:1.2px;background:#c6c6c6;"></div>
<div class="a" style="left:145px;top:133.26px;width:10px;height:1.2px;background:#c6c6c6;"></div>
<div class="a" style="left:62px;top:136.39px;width:2px;height:2px;background:#8eaad0;"></div>
<div class="a" style="left:65px;top:136.69px;width:32px;height:1.2px;background:#bdbdbd;"></div>
<div class="a" style="left:103px;top:136.69px;width:10px;height:1.2px;background:#c6c6c6;"></div>
<div class="a" style="left:119px;top:136.69px;width:7px;height:1.2px;background:#c6c6c6;"></div>
<div class="a" style="left:129px;top:136.69px;width:12px;height:1.2px;background:#c6c6c6;"></div>
<div class="a" style="left:145px;top:136.69px;width:10px;height:1.2px;background:#c6c6c6;"></div>
<div class="a" style="left:62px;top:139.82px;width:2px;height:2px;background:#8eaad0;"></div>
<div class="a" style="left:65px;top:140.12px;width:32px;height:1.2px;background:#bdbdbd;"></div>
<div class="a" style="left:103px;top:140.12px;width:11px;height:1.2px;background:#c6c6c6;"></div>
<div class="a" style="left:119px;top:140.12px;width:7px;height:1.2px;background:#c6c6c6;"></div>
<div class="a" style="left:129px;top:140.12px;width:7px;height:1.2px;background:#c6c6c6;"></div>
<div class="a" style="left:145px;top:140.12px;width:9px;height:1.2px;background:#c6c6c6;"></div>
<div class="a" style="left:62px;top:143.25px;width:2px;height:2px;background:#8eaad0;"></div>
<div class="a" style="left:65px;top:143.55px;width:34px;height:1.2px;background:#bdbdbd;"></div>
<div class="a" style="left:103px;top:143.55px;width:10px;height:1.2px;background:#c6c6c6;"></div>
<div class="a" style="left:129px;top:143.55px;width:11px;height:1.2px;background:#c6c6c6;"></div>
<div class="a" style="left:145px;top:143.55px;width:10px;height:1.2px;background:#c6c6c6;"></div>
<div class="a" style="left:62px;top:146.68px;width:2px;height:2px;background:#8eaad0;"></div>
<div class="a" style="left:65px;top:146.98000000000002px;width:26px;height:1.2px;background:#bdbdbd;"></div>
<div class="a" style="left:103px;top:146.98000000000002px;width:11px;height:1.2px;background:#c6c6c6;"></div>
<div class="a" style="left:129px;top:146.98000000000002px;width:12px;height:1.2px;background:#c6c6c6;"></div>
<div class="a" style="left:145px;top:146.98000000000002px;width:9px;height:1.2px;background:#c6c6c6;"></div>
<div class="a" style="left:62px;top:150.11px;width:2px;height:2px;background:#8eaad0;"></div>
<div class="a" style="left:65px;top:150.41000000000003px;width:29px;height:1.2px;background:#bdbdbd;"></div>
<div class="a" style="left:103px;top:150.41000000000003px;width:10px;height:1.2px;background:#c6c6c6;"></div>
<div class="a" style="left:129px;top:150.41000000000003px;width:11px;height:1.2px;background:#c6c6c6;"></div>
<div class="a" style="left:145px;top:150.41000000000003px;width:11px;height:1.2px;background:#c6c6c6;"></div>
<div class="a" style="left:62px;top:153.54px;width:2px;height:2px;background:#8eaad0;"></div>
<div class="a" style="left:65px;top:153.84px;width:32px;height:1.2px;background:#bdbdbd;"></div>
<div class="a" style="left:103px;top:153.84px;width:11px;height:1.2px;background:#c6c6c6;"></div>
<div class="a" style="left:129px;top:153.84px;width:9px;height:1.2px;background:#c6c6c6;"></div>
<div class="a" style="left:145px;top:153.84px;width:12px;height:1.2px;background:#c6c6c6;"></div>
<div class="a" style="left:62px;top:156.97px;width:2px;height:2px;background:#8eaad0;"></div>
<div class="a" style="left:65px;top:157.27px;width:31px;height:1.2px;background:#bdbdbd;"></div>
<div class="a" style="left:103px;top:157.27px;width:9px;height:1.2px;background:#c6c6c6;"></div>
<div class="a" style="left:129px;top:157.27px;width:8px;height:1.2px;background:#c6c6c6;"></div>
<div class="a" style="left:145px;top:157.27px;width:10px;height:1.2px;background:#c6c6c6;"></div>
<div class="a" style="left:62px;top:160.4px;width:2px;height:2px;background:#8eaad0;"></div>
<div class="a" style="left:65px;top:160.70000000000002px;width:18px;height:1.2px;background:#bdbdbd;"></div>
<div class="a" style="left:103px;top:160.70000000000002px;width:12px;height:1.2px;background:#c6c6c6;"></div>
<div class="a" style="left:129px;top:160.70000000000002px;width:11px;height:1.2px;background:#c6c6c6;"></div>
<div class="a" style="left:145px;top:160.70000000000002px;width:12px;height:1.2px;background:#c6c6c6;"></div>
<div class="a" style="left:62px;top:163.82999999999998px;width:2px;height:2px;background:#8eaad0;"></div>
<div class="a" style="left:65px;top:164.13px;width:35px;height:1.2px;background:#bdbdbd;"></div>
<div class="a" style="left:103px;top:164.13px;width:10px;height:1.2px;background:#c6c6c6;"></div>
<div class="a" style="left:119px;top:164.13px;width:7px;height:1.2px;background:#c6c6c6;"></div>
<div class="a" style="left:129px;top:164.13px;width:10px;height:1.2px;background:#c6c6c6;"></div>
<div class="a" style="left:145px;top:164.13px;width:11px;height:1.2px;background:#c6c6c6;"></div>
<div class="a" style="left:62px;top:167.26px;width:2px;height:2px;background:#8eaad0;"></div>
<div class="a" style="left:65px;top:167.56px;width:35px;height:1.2px;background:#bdbdbd;"></div>
<div class="a" style="left:103px;top:167.56px;width:11px;height:1.2px;background:#c6c6c6;"></div>
<div class="a" style="left:129px;top:167.56px;width:7px;height:1.2px;background:#c6c6c6;"></div>
<div class="a" style="left:145px;top:167.56px;width:11px;height:1.2px;background:#c6c6c6;"></div>
<div class="a" style="left:62px;top:170.69px;width:2px;height:2px;background:#8eaad0;"></div>
<div class="a" style="left:65px;top:170.99px;width:21px;height:1.2px;background:#bdbdbd;"></div>
<div class="a" style="left:103px;top:170.99px;width:10px;height:1.2px;background:#c6c6c6;"></div>
<div class="a" style="left:119px;top:170.99px;width:7px;height:1.2px;background:#c6c6c6;"></div>
<div class="a" style="left:129px;top:170.99px;width:12px;height:1.2px;background:#c6c6c6;"></div>
<div class="a" style="left:145px;top:170.99px;width:10px;height:1.2px;background:#c6c6c6;"></div>
<div class="a" style="left:62px;top:136.2px;width:91px;height:2.8px;background:rgba(0,0,0,.07);"></div>
<div class="a" style="left:300px;top:18px;width:4px;height:159px;background:#f0f0f0;"></div>
<div class="a" style="left:301px;top:20px;width:2px;height:2px;background:#999;"></div>
<div class="a" style="left:301px;top:141px;width:2px;height:30px;background:#c8c8c8;"></div>
<div class="a" style="left:23px;top:176px;width:281px;height:0.8px;background:#ddd;"></div>
<div class="a" style="left:24px;top:176.5px;width:14px;height:2px;background:#eee;"></div>
<div class="a" style="left:25px;top:177px;width:10px;height:1px;background:#999;"></div>
<div class="a" style="left:40px;top:177px;width:10px;height:1px;background:#aaa;"></div>
<div class="a" style="left:106px;top:42px;width:74px;height:86px;background:#fff;border:1px solid #a9a9a9;box-shadow:0 0 3px rgba(0,0,0,.35)"></div>
<div class="a" style="left:108px;top:44px;width:38px;height:1.1px;background:#9a9a9a;"></div>
<div class="a" style="left:175px;top:43.5px;width:2px;height:2px;background:#999;"></div>
<div class="a" style="left:107px;top:48px;width:72px;height:5px;background:#f0f0f0;"></div>
<div class="a" style="left:108px;top:49.5px;width:6px;height:1.2px;background:#666;"></div>
<div class="a" style="left:116px;top:49.5px;width:6px;height:1.2px;background:#999;"></div>
<div class="a" style="left:125px;top:49.5px;width:8px;height:1.2px;background:#999;"></div>
<div class="a" style="left:135px;top:49.5px;width:14px;height:1.2px;background:#999;"></div>
<div class="a" style="left:112px;top:55px;width:10px;height:1.1px;background:#999;"></div>
<div class="a" style="left:125px;top:55px;width:9px;height:1.1px;background:#777;"></div>
<div class="a" style="left:112px;top:60px;width:10px;height:1.1px;background:#999;"></div>
<div class="a" style="left:125px;top:60px;width:13px;height:1.1px;background:#777;"></div>
<div class="a" style="left:112px;top:64.5px;width:9px;height:1.1px;background:#999;"></div>
<div class="a" style="left:124px;top:63px;width:53px;height:6px;border:0.8px solid #ccc"></div>
<div class="a" style="left:125px;top:64.5px;width:48px;height:1px;background:#aaa;"></div>
<div class="a" style="left:125px;top:66.5px;width:40px;height:1px;background:#aaa;"></div>
<div class="a" style="left:112px;top:72px;width:15px;height:1.1px;background:#999;"></div>
<div class="a" style="left:112px;top:75px;width:40px;height:1.1px;background:#999;"></div>
<div class="a" style="left:112px;top:81.5px;width:10px;height:1.1px;background:#999;"></div>
<div class="a" style="left:125.5px;top:81px;width:48px;height:4.5px;border:0.8px solid #7a9fd8;background:#fff"></div>
<div class="a" style="left:126.5px;top:82.2px;width:10px;height:1px;background:#555;"></div>
<div class="a" style="left:125.5px;top:85.5px;width:48.5px;height:10px;border:0.6px solid #666;background:#fff"></div>
<div class="a" style="left:126px;top:86px;width:47.5px;height:2.2px;background:#1e6be0;"></div>
<div class="a" style="left:127px;top:89px;width:10px;height:1px;background:#666;"></div>
<div class="a" style="left:127px;top:91.5px;width:8px;height:1px;background:#666;"></div>
<div class="a" style="left:127px;top:94px;width:10px;height:1px;background:#666;"></div>
<div class="a" style="left:112px;top:88px;width:50px;height:0.6px;background:#ddd;"></div>
<div class="a" style="left:112px;top:96px;width:13px;height:1.1px;background:#999;"></div>
<div class="a" style="left:117px;top:99.5px;width:15px;height:3.5px;background:#e5e5e5;border:0.6px solid #bbb"></div>
<div class="a" style="left:133px;top:99.5px;width:15px;height:3.5px;background:#e5e5e5;border:0.6px solid #bbb"></div>
<div class="a" style="left:149px;top:99.5px;width:15px;height:3.5px;background:#e5e5e5;border:0.6px solid #bbb"></div>
<div class="a" style="left:166px;top:99.5px;width:15px;height:3.5px;background:#e5e5e5;border:0.6px solid #bbb"></div>
<div class="a" style="left:112px;top:106px;width:55px;height:1px;background:#aaa;"></div>
<div class="a" style="left:112px;top:108px;width:22px;height:1px;background:#aaa;"></div>
<div class="a" style="left:112px;top:113px;width:17px;height:1px;background:#ccc;"></div>
<div class="a" style="left:136px;top:112px;width:40px;height:3.5px;border:0.6px solid #ddd"></div>
<div class="a" style="left:107px;top:121px;width:72px;height:6.5px;background:#f0f0f0;"></div>
<div class="a" style="left:143px;top:122.5px;width:12.5px;height:3.5px;background:#e5f1fb;border:0.8px solid #3b7fd8"></div>
<div class="a" style="left:158px;top:122.5px;width:12.5px;height:3.5px;background:#e5e5e5;border:0.6px solid #aaa"></div>
<div class="a" style="left:172px;top:122.5px;width:6px;height:3.5px;background:#e5e5e5;border:0.6px solid #ccc"></div>
<div class="a" style="left:0px;top:182.5px;width:304px;height:6.5px;background:#101010;"></div>
<div class="a" style="left:2px;top:184px;width:2.5px;height:2.5px;background:#fff;"></div>
<div class="a" style="left:8px;top:183.2px;width:63px;height:5px;background:#3a3a3a;"></div>
<div class="a" style="left:11px;top:185px;width:25px;height:1.1px;background:#777;"></div>
<div class="a" style="left:73px;top:184px;width:3px;height:3px;background:#ddd;border-radius:50%"></div>
<div class="a" style="left:82px;top:184px;width:3px;height:3px;background:#1e7ddb;border-radius:50%"></div>
<div class="a" style="left:90px;top:184px;width:3px;height:3px;background:#f0c850;border-radius:50%"></div>
<div class="a" style="left:99px;top:184px;width:3px;height:3px;background:#eee;border-radius:50%"></div>
<div class="a" style="left:108px;top:184px;width:3px;height:3px;background:#db4437;border-radius:50%"></div>
<div class="a" style="left:117px;top:184px;width:3px;height:3px;background:#8661c5;border-radius:50%"></div>
<div class="a" style="left:126px;top:184px;width:3px;height:3px;background:#4ec21d;border-radius:50%"></div>
<div class="a" style="left:136px;top:184px;width:3px;height:3px;background:#cfe;border-radius:50%"></div>
<div class="a" style="left:133px;top:182.5px;width:10px;height:6.5px;background:#3d4a5a;;opacity:.6"></div>
<div class="a" style="left:276px;top:184.5px;width:3px;height:2.5px;background:#ddd;"></div>
<div class="a" style="left:281px;top:184.5px;width:3px;height:2.5px;background:#ddd;"></div>
<div class="a" style="left:286px;top:184.5px;width:3px;height:2.5px;background:#ddd;"></div>
<div class="a" style="left:292px;top:184.5px;width:3px;height:2.5px;background:#ddd;"></div>
<div class="a" style="left:296px;top:183.5px;width:7px;height:4px;background:#ccc;"></div>
 </div>
</div>
<div class="a" style="left:984px;top:254px;width:16px;height:699px;background:#f0f0f0"></div>
<svg class="a" style="left:988px;top:260px" width="8" height="5" viewBox="0 0 8 5"><path d="M0 5L4 0l4 5z" fill="#222"/></svg>
<div class="a" style="left:986px;top:557px;width:12px;height:352px;background:#c1c1c1"></div>
<div class="a" style="left:975px;top:929px;width:21px;height:21px;border-radius:50%;background:#e5493d"></div>
<div class="t" style="left:977.5px;top:933.5px;font-size:12px;color:#fff">47</div>
<div class="a" style="left:988px;top:923px;width:12px;height:12px;border-radius:50%;background:#f0c35a"></div>
<div class="a" style="left:993.3px;top:925px;width:1.6px;height:5px;background:#fff"></div>
<div class="a" style="left:993.3px;top:931px;width:1.6px;height:1.6px;background:#fff"></div>


<!-- BLOGGER HEADER -->
<svg class="a" style="left:19.4px;top:118.3px" width="24" height="24" viewBox="0 0 24 24"><rect width="24" height="24" rx="2.8" fill="#ff5722"/><path d="M4.7 7.5Q4.7 3.6 8.6 3.6H12.6Q16.3 3.6 16.3 7.3V11.2Q16.3 12.6 17.6 12.8Q19.4 13 19.4 15V15.8Q19.4 19.4 15.8 19.4H8.6Q4.7 19.4 4.7 15.5Z" fill="#fff"/><rect x="8.5" y="7.6" width="5.2" height="1.9" rx="0.95" fill="#ff5722"/><rect x="8.5" y="13.3" width="7" height="2.4" rx="1.2" fill="#ff5722"/></svg>
<div class="t" style="left:54px;top:121.3px;font-size:20.3px;color:#212121">Blogger</div>
<div class="a" style="left:154.5px;top:120px;width:1px;height:23px;background:#666"></div>
<!-- TITLE ROW -->
<div class="t" style="left:29px;top:174.2px;font-size:18.2px;color:#555">computer and pri...</div>
<div class="t" style="left:194px;top:173.4px;font-size:17.5px;color:#888">·</div>
<div class="t" style="left:205px;top:174.7px;font-size:17.5px;color:#f4683f">Post</div>
<div class="a" style="left:250px;top:170px;width:875px;height:26px;border:1px solid #e3e3e3;background:#fff"></div>
<div class="t" style="left:254px;top:177.1px;font-size:12.37px;color:#222">windows 10 update off all permanent computer and laptop friends how?</div>
<div class="a" style="left:1144px;top:170px;width:23px;height:23px;border-radius:50%;background:radial-gradient(circle at 50% 30%,#999,#555 70%);overflow:hidden">
 <div class="a" style="left:7px;top:4px;width:9px;height:10px;border-radius:50%;background:#3d3d3d"></div>
 <div class="a" style="left:3px;top:13px;width:17px;height:14px;border-radius:50%;background:#3d3d3d"></div>
</div>
<div class="t" style="left:1176px;top:177px;font-size:11.35px;color:#333">Posting as</div>
<div class="t" style="left:1232px;top:177.7px;font-size:10.5px;font-weight:bold;color:#222">Dbz shiva</div>
<div class="a" style="left:1292px;top:169px;width:57px;height:27px;background:#f4683f;border:1px solid #e5582d;border-radius:2px"></div>
<div class="t" style="left:1302.5px;top:178.8px;font-size:10.33px;font-weight:bold;color:#fff">Update</div>
<div class="a" style="left:1357px;top:169px;width:93px;height:27px;background:#f3f3f3;border:1px solid #dcdcdc;border-radius:2px"></div>
<div class="t" style="left:1368px;top:178.8px;font-size:10.39px;font-weight:bold;color:#333">Revert to draft</div>
<div class="a" style="left:1458px;top:169px;width:60px;height:27px;background:#f3f3f3;border:1px solid #dcdcdc;border-radius:2px"></div>
<div class="t" style="left:1469px;top:178.8px;font-size:10.31px;font-weight:bold;color:#333">Preview</div>
<div class="a" style="left:1527px;top:169px;width:49px;height:27px;background:#f3f3f3;border:1px solid #dcdcdc;border-radius:2px"></div>
<div class="t" style="left:1537.5px;top:178.8px;font-size:10.28px;font-weight:bold;color:#333">Close</div>
<!-- EDITOR TOOLBAR -->
<!-- toolbar icons -->
<svg class="a" style="left:163px;top:218px" width="15" height="11" viewBox="0 0 15 11"><path d="M3.5 5.5C6 2.5 11 2 13.8 8.5" fill="none" stroke="#1f4f9e" stroke-width="2.4"/><path d="M0.5 2v7.5h7.5z" fill="#1f4f9e"/></svg>
<svg class="a" style="left:188px;top:218px" width="15" height="11" viewBox="0 0 15 11"><path d="M11.5 5.5C9 2.5 4 2 1.2 8.5" fill="none" stroke="#c9d3e2" stroke-width="2.4"/><path d="M14.5 2v7.5H7z" fill="#c9d3e2"/></svg>
<div class="a" style="left:210px;top:215px;width:1px;height:18px;background:#e2e2e2"></div>
<svg class="a" style="left:218px;top:217px" width="13" height="14" viewBox="0 0 15 18" preserveAspectRatio="none"><path d="M4 3.5C6 1.5 10 2 14 1.5M8.5 2.5C7.5 7 6.5 12 5 15c-1 2-3 2-4 1M5 8.5h6" fill="none" stroke="#111" stroke-width="1.8" stroke-linecap="round"/></svg>
<svg class="a" style="left:237px;top:223px" width="7" height="4" viewBox="0 0 7 4"><path d="M0 0h7L3.5 4z" fill="#1b2a55"/></svg>
<svg class="a" style="left:253px;top:218px" width="15" height="11" viewBox="0 0 15 11"><path d="M6 .7h8.5M10.25 .7V10.3M8.5 10.3h3.5M6 .3v2M14.5 .3v2M.5 4.5h5M3 4.5v5.8M2 10.3h2M.5 4.2v1.5M5.5 4.2v1.5" fill="none" stroke="#111" stroke-width="1.2"/></svg>
<svg class="a" style="left:273px;top:223px" width="7" height="4" viewBox="0 0 7 4"><path d="M0 0h7L3.5 4z" fill="#1b2a55"/></svg>
<div class="a" style="left:285px;top:212px;width:88px;height:23px;border:1px solid #c3cfe6;border-radius:2px;background:#fff"></div>
<div class="t" style="left:289px;top:217px;font-size:11.5px;color:#333">Normal</div>
<svg class="a" style="left:362px;top:223px" width="7" height="4" viewBox="0 0 7 4"><path d="M0 0h7L3.5 4z" fill="#1b2a55"/></svg>
<div class="a" style="left:376px;top:215px;width:1px;height:18px;background:#e2e2e2"></div>
<div class="a" style="left:381px;top:212px;width:23px;height:23px;border:1px solid #a8bde0;border-radius:2px;background:#dde4f0"></div>
<div class="t" style="left:387px;top:216px;font:bold 13px/1 'Liberation Serif',serif;color:#111">B</div>
<div class="t" style="left:413px;top:216px;font:italic 14px/1 'Liberation Serif',serif;color:#111">I</div>
<div class="t" style="left:437px;top:216px;font:bold 12px/1 'Liberation Serif',serif;color:#111;text-decoration:underline;text-decoration-color:#777">U</div>
<div class="t" style="left:459px;top:219px;font:8px/1 'Liberation Serif',serif;color:#222;text-decoration:line-through">ABC</div>
<div class="a" style="left:482px;top:215px;width:1px;height:18px;background:#e2e2e2"></div>
<svg class="a" style="left:490px;top:215px" width="15" height="17" viewBox="0 0 15 17"><path d="M2 12.5L7.5 1l5.5 11.5M4.2 8.5h6.6" fill="none" stroke="#3a3a6a" stroke-width="1.6"/><rect x="0" y="14" width="15" height="3" fill="#0000ff"/></svg>
<svg class="a" style="left:508px;top:223px" width="7" height="4" viewBox="0 0 7 4"><path d="M0 0h7L3.5 4z" fill="#1b2a55"/></svg>
<svg class="a" style="left:524px;top:215px" width="15" height="15" viewBox="0 0 15 15"><path d="M1 14l2-4 6-7 4 3-6 7z" fill="#f5f0b0" stroke="#aaa" stroke-width="1"/><path d="M9 3l2-2 3 2.5-2 2.5z" fill="#bbb"/></svg>
<svg class="a" style="left:544px;top:223px" width="7" height="4" viewBox="0 0 7 4"><path d="M0 0h7L3.5 4z" fill="#1b2a55"/></svg>
<div class="a" style="left:558px;top:215px;width:1px;height:18px;background:#e2e2e2"></div>
<div class="t" style="left:566px;top:216px;font-size:13px;color:#6a4fc3;text-decoration:underline;text-decoration-color:#b7a8e0">Link</div>
<div class="a" style="left:597px;top:216px;width:19px;height:17px;border:1px solid #c3cfe6;background:#fff"></div>
<div class="a" style="left:600px;top:219px;width:13px;height:10px;background:linear-gradient(#7fa3c8,#b8c8d8 50%,#6f7f6f)"></div>
<svg class="a" style="left:623px;top:215px" width="16" height="16" viewBox="0 0 16 16"><path d="M1 6h14v9H1z" fill="#111"/><path d="M1 5.5L14 1.5l1 3-13 4z" fill="#111"/><path d="M4 4.5l2 2.5M8 3.3l2 2.5M12 2l2 2.5" stroke="#fff" stroke-width="1"/></svg>
<svg class="a" style="left:648px;top:216px" width="14" height="14" viewBox="0 0 14 14"><circle cx="7" cy="7" r="6.1" fill="none" stroke="#111" stroke-width="1.6"/><circle cx="4.8" cy="5.3" r="1.1" fill="#111"/><circle cx="9.2" cy="5.3" r="1.1" fill="#111"/><path d="M3.8 8.2q3.2 3.8 6.4 0z" fill="#111"/></svg>
<svg class="a" style="left:673px;top:215px" width="14" height="17" viewBox="0 0 14 17"><path d="M1 1h8l4 4v11H1z" fill="#eef4fb" stroke="#c5d4e6" stroke-width="1"/><path d="M2 7q2.5-2 5 0t5 0M2 10q2.5-2 5 0t5 0" fill="none" stroke="#6b8fc0" stroke-width="1"/></svg>
<div class="a" style="left:695px;top:215px;width:1px;height:18px;background:#e2e2e2"></div>
<svg class="a" style="left:704px;top:218px" width="15" height="12" viewBox="0 0 15 12"><path d="M0 1h14M0 4h10M0 7h14M0 10h10" stroke="#222" stroke-width="1.3"/></svg>
<svg class="a" style="left:723px;top:223px" width="7" height="4" viewBox="0 0 7 4"><path d="M0 0h7L3.5 4z" fill="#1b2a55"/></svg>
<svg class="a" style="left:740px;top:216px" width="14" height="14" viewBox="0 0 14 14"><path d="M5 2h9M5 7h9M5 12h9" stroke="#333" stroke-width="1.4"/><path d="M1 0.5v3M0.5 5.5h2l-2 2h2M0.5 10h2v4h-2" fill="none" stroke="#333" stroke-width="0.9"/></svg>
<svg class="a" style="left:765px;top:216px" width="14" height="14" viewBox="0 0 14 14"><path d="M5 2h9M5 7h9M5 12h9" stroke="#333" stroke-width="1.4"/><circle cx="1.5" cy="2" r="1.5" fill="#111"/><circle cx="1.5" cy="7" r="1.5" fill="#111"/><circle cx="1.5" cy="12" r="1.5" fill="#111"/></svg>
<svg class="a" style="left:789px;top:217px" width="14" height="11" viewBox="0 0 14 11"><path d="M0 11V6C0 3 1.5 1 4.5 0v2C3 2.8 2.5 4 2.5 5H6v6zM8 11V6c0-3 1.5-5 4.5-6v2c-1.5.8-2 2-2 3H14v6z" fill="#1f3d7a"/></svg>
<svg class="a" style="left:813px;top:215px" width="16" height="17" viewBox="0 0 16 17"><path d="M3 2h10M8 2L5 13" stroke="#111" stroke-width="2"/><path d="M1 14.5h8" stroke="#999" stroke-width="1"/><path d="M10 11l5 5M15 11l-5 5" stroke="#d42020" stroke-width="1.8"/></svg>
<div class="a" style="left:836px;top:215px;width:1px;height:18px;background:#e2e2e2"></div>
<svg class="a" style="left:844px;top:216px" width="15" height="15" viewBox="0 0 15 15"><text x="7.5" y="5" font-size="5" font-family="Liberation Sans" font-weight="bold" fill="#1f3d7a" text-anchor="middle">ABC</text><path d="M2 9l4 4 8-8" fill="none" stroke="#4caf50" stroke-width="2.2"/></svg>
<div class="t" style="left:869px;top:214px;font-size:17px;color:#111;font-family:'Liberation Serif',serif">अ</div>
<svg class="a" style="left:897px;top:223px" width="7" height="4" viewBox="0 0 7 4"><path d="M0 0h7L3.5 4z" fill="#1b2a55"/></svg>
<div class="a" style="left:911px;top:215px;width:1px;height:18px;background:#e2e2e2"></div>
<div class="a" style="left:915px;top:212px;width:23px;height:23px;border:1px solid #a8bde0;border-radius:2px;background:#dde4f0"></div>
<svg class="a" style="left:920px;top:218px" width="13" height="12" viewBox="0 0 13 12"><path d="M0 3l3 3-3 3z" fill="#3b8ad8"/><path d="M7 0h6M9 0v12M12 0v12" stroke="#333" stroke-width="1.2"/><circle cx="8" cy="3" r="2.5" fill="#333"/></svg>
<svg class="a" style="left:945px;top:218px" width="13" height="12" viewBox="0 0 13 12"><path d="M13 3l-3 3 3 3z" fill="#3b8ad8"/><path d="M1 0h6M3 0v12M6 0v12" stroke="#333" stroke-width="1.2"/><circle cx="2" cy="3" r="2.5" fill="#333"/></svg>

<div class="a" style="left:29px;top:211px;width:118px;height:27px;border:1px solid #d6d6d6;border-radius:2px;background:#f1f1f1;overflow:hidden"><div class="a" style="left:0;top:0;width:67px;height:25px;background:linear-gradient(#eaeaea,#e2e2e2);border-right:1px solid #d6d6d6"></div></div>
<div class="t" style="left:39.4px;top:219.9px;font-size:10.31px;font-weight:bold;color:#333">Compose</div>
<div class="t" style="left:107.7px;top:220.3px;font-size:9.8px;font-weight:bold;color:#333">HTML</div>

<div id="fly" class="a"></div>
<!-- FLYOUT content -->
<div class="a" style="left:1340px;top:425px;width:110px;height:16px;border-radius:8px;background:#4b4b4b;filter:blur(6px);opacity:.6"></div>
<div class="a" style="left:1345px;top:462px;width:90px;height:16px;border-radius:8px;background:#4b4b4b;filter:blur(6px);opacity:.6"></div>
<svg class="a" style="left:1270px;top:434px" width="22" height="21" viewBox="0 0 22 21"><path d="M1.5 20A17 17 0 0 1 18.5 2.5M6.3 20A12.3 12.3 0 0 1 18.5 7.4M11 20A7.5 7.5 0 0 1 18.5 12.2" fill="none" stroke="#fff" stroke-width="1.5"/><circle cx="17.6" cy="18.5" r="2" fill="#fff"/></svg>
<div class="t" style="left:1303px;top:435.6px;font-size:14px;color:#fff">gour</div>
<div class="t" style="left:1303px;top:454.6px;font-size:14px;color:#fff">Connected</div>
<div class="a" style="left:1491px;top:931px;width:96px;height:29px;background:#5a4640;filter:blur(4px)"></div>
<div class="t" style="left:1268.6px;top:934.8px;font-size:14.39px;color:#4ea4ec">Network settings</div>

<div id="task" class="a"></div>
<!-- TASKBAR content -->
<svg class="a" style="left:15px;top:973px" width="17" height="16" viewBox="0 0 17 16"><path d="M0 2.2L6.8 1.3V7.5H0zM7.7 1.2L17 0V7.5H7.7zM0 8.4h6.8v6.3L0 13.8zM7.7 8.4H17V16l-9.3-1.3z" fill="#fff"/></svg>
<div class="a" style="left:46px;top:963px;width:327px;height:37px;background:#333333"></div>
<div class="t" style="left:57.5px;top:975.1px;font-size:13.98px;color:#b4b4b4">Search the web and Windows</div>
<svg class="a" style="left:385px;top:973px" width="22" height="16" viewBox="0 0 22 16"><rect x="4.5" y="0.8" width="13" height="14.4" fill="none" stroke="#fff" stroke-width="1.5"/><path d="M1 3v10M21 3v10" stroke="#fff" stroke-width="1.2"/></svg>
<svg class="a" style="left:433px;top:971px" width="22" height="21" viewBox="0 0 22 21"><path d="M20.5 12.5H5.8c.2 3.5 3 5.5 6.5 5.5 3 0 5.5-1 7.5-2.3v3.6C17.6 20.5 15 21 12 21 5 21 1.5 16.5 1.5 11 1.5 4.5 6.5 0 12.5 0 18 0 21 3.8 21 9.5zM16 9.3c0-2.7-1.5-4.8-4.3-4.8-2.6 0-4.9 1.9-5.6 4.8z" fill="#1e7ddb"/></svg>
<svg class="a" style="left:480px;top:971px" width="21" height="20" viewBox="0 0 21 20"><path d="M0 2h7l2 2h12v16H0z" fill="#e8c25a"/><path d="M0 6h21v14H0z" fill="#f6d77b"/><path d="M5 13h11v7h-3v-4H8v4H5z" fill="#2b9ce8"/></svg>
<svg class="a" style="left:526px;top:969px" width="22" height="24" viewBox="0 0 22 24"><path d="M7 6V4a4 4 0 0 1 8 0v2" fill="none" stroke="#fff" stroke-width="1.8"/><path d="M1 6h20l-1.5 17.5H2.5z" fill="#fff"/><path d="M6 11h4.5v4H6zM11.5 11H16v4h-4.5zM6 16h4.5v4H6zM11.5 16H16v4h-4.5z" fill="#05070c"/></svg>
<svg class="a" style="left:572px;top:970px" width="23" height="23" viewBox="0 0 23 23"><circle cx="11.5" cy="11.5" r="11.3" fill="#db4437"/><path d="M11.5 11.5L1.7 5.8A11.3 11.3 0 0 0 7.1 21.9z" fill="#0f9d58"/><path d="M11.5 11.5L7.1 21.9A11.3 11.3 0 0 0 22.8 11.5 11.3 11.3 0 0 0 21.3 5.8z" fill="#ffcd40"/><circle cx="11.5" cy="11.5" r="5.2" fill="#fff"/><circle cx="11.5" cy="11.5" r="4.1" fill="#4285f4"/></svg>
<div class="a" style="left:565px;top:997px;width:38px;height:3px;background:#76b9ed"></div>
<svg class="a" style="left:618px;top:969px" width="25" height="24" viewBox="0 0 25 24"><path d="M18 0l7 3v18l-7 3L7 14l-4 3.5L0 16V8l3-1.5L7 10zM18 6.5L11.5 12 18 17.5zM3 9v6l3-3z" fill="#8661c5"/></svg>
<svg class="a" style="left:665px;top:972px" width="24" height="19" viewBox="0 0 24 19"><path d="M3 0h18l3 8-3 11h-4l-2-5H9l-2 5H3L0 8z" fill="#4ec21d"/><path d="M6 3h12l-2 6H8z" fill="#0a1a05" opacity=".55"/></svg>
<svg class="a" style="left:1442px;top:977px" width="14" height="8" viewBox="0 0 14 8"><path d="M1 7.5L7 1.5l6 6" fill="none" stroke="#fff" stroke-width="1.3"/></svg>
<svg class="a" style="left:1465px;top:975px" width="15" height="13" viewBox="0 0 15 13"><path d="M1 12.5A11.5 11.5 0 0 1 12.5 1M4 12.5A8.5 8.5 0 0 1 12.5 4M7 12.5A5.5 5.5 0 0 1 12.5 7" fill="none" stroke="#fff" stroke-width="1.2"/><rect x="10" y="9.5" width="4.5" height="3.5" fill="#fff"/></svg>
<svg class="a" style="left:1485px;top:974px" width="17" height="14" viewBox="0 0 17 14"><path d="M1 4.5h3L8 1v12L4 9.5H1z" fill="none" stroke="#fff" stroke-width="1.2"/><path d="M10.5 4.5a3 3 0 0 1 0 5M12.5 2.8a5.5 5.5 0 0 1 0 8.4M14.5 1a8 8 0 0 1 0 12" fill="none" stroke="#fff" stroke-width="1"/></svg>
<svg class="a" style="left:1509px;top:972px" width="17" height="17" viewBox="0 0 17 17"><path d="M0 0h17v12H10l-2 5-2-5H0z" fill="#fff"/><path d="M3 3h11M3 6h11M3 9h7" stroke="#05070c" stroke-width="1.1"/></svg>
<div class="t" style="left:1538.5px;top:967.5px;font-size:11.5px;color:#fff;letter-spacing:-0.2px">10:23 AM</div>
<div class="t" style="left:1540px;top:983px;font-size:11.5px;color:#fff;letter-spacing:-0.2px">9/1/2019</div>
<div class="a" style="left:1595px;top:962px;width:1px;height:38px;background:#555"></div>

</body></html>
